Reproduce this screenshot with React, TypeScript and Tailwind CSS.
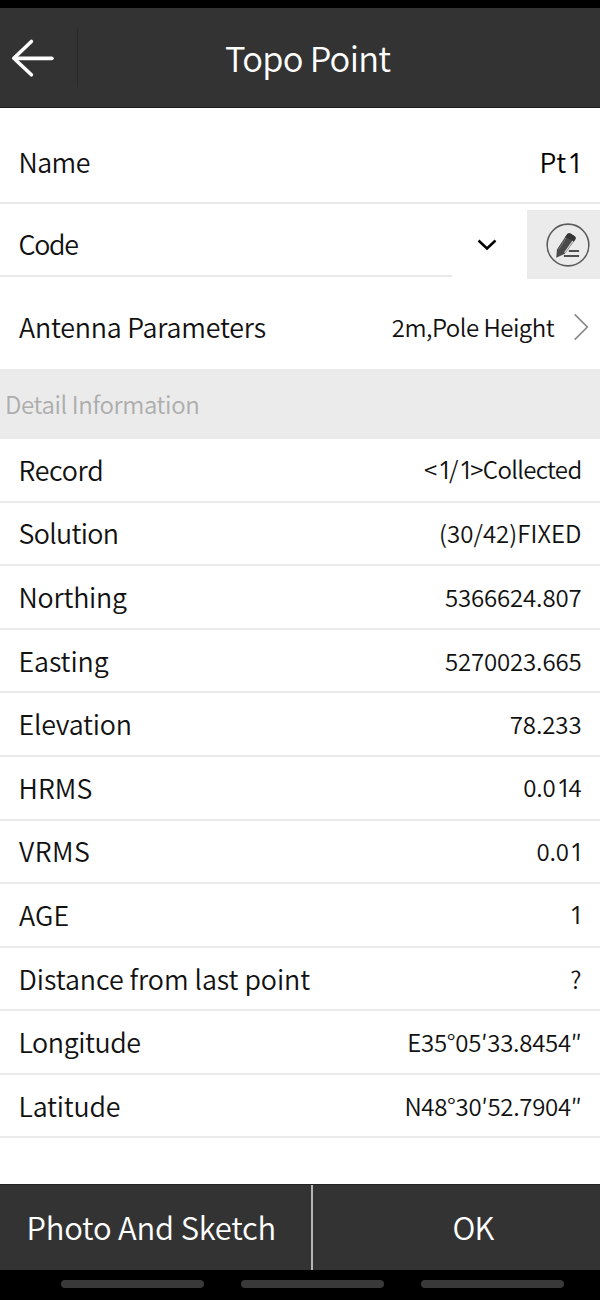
import { Fragment } from 'react';

type Item = { label: string; labelClass: string; value: string; valueClass: string };

const details: Item[] = [
  { label: 'Record', labelClass: 'tracking-[-0.3px]', value: '<1/1>Collected', valueClass: 'tracking-[-0.66px]' },
  { label: 'Solution', labelClass: 'tracking-[-0.65px]', value: '(30/42)FIXED', valueClass: 'tracking-[0.05px]' },
  { label: 'Northing', labelClass: 'tracking-[-0.2px]', value: '5366624.807', valueClass: 'tracking-[-0.15px]' },
  { label: 'Easting', labelClass: 'tracking-[-0.1px]', value: '5270023.665', valueClass: 'tracking-[-0.15px]' },
  { label: 'Elevation', labelClass: 'tracking-[-0.22px]', value: '78.233', valueClass: 'tracking-[-0.09px]' },
  { label: 'HRMS', labelClass: 'tracking-[0.07px]', value: '0.014', valueClass: 'tracking-[-0.2px]' },
  { label: 'VRMS', labelClass: 'tracking-[0.5px] pl-[0.500px]', value: '0.01', valueClass: 'tracking-[-0.24px]' },
  { label: 'AGE', labelClass: 'tracking-[0.12px] pl-[0.500px]', value: '1', valueClass: '' },
  { label: 'Distance from last point', labelClass: 'tracking-[-0.04px]', value: '?', valueClass: '' },
  { label: 'Longitude', labelClass: 'tracking-[-0.42px]', value: 'E35°05′33.8454″', valueClass: 'tracking-[-0.28px]' },
  { label: 'Latitude', labelClass: 'tracking-[-0.2px]', value: 'N48°30′52.7904″', valueClass: 'tracking-[-0.3px]' },
];

// The digit one is set in a face whose "1" has no foot.
function Value({ text }: { text: string }) {
  return (
    <>
      {text.split('1').map((part, i) => (
        <Fragment key={i}>
          {i > 0 && <span className="-mr-[2.500px] ml-[1.500px] font-['Open_Sans'] text-[1.03em] font-normal">1</span>}
          {part}
        </Fragment>
      ))}
    </>
  );
}

function BackArrow() {
  return (
    <svg width="44" height="40" viewBox="0 0 44 40" fill="none" stroke="#fff" strokeLinecap="round" strokeLinejoin="round">
      <path d="M20.400 3.500 2.800 20.300l17.600 16.500" strokeWidth="3.6" />
      <path d="M3.500 20.300h37.300" strokeWidth="3.8" />
    </svg>
  );
}

function EditIcon() {
  return (
    <svg width="44" height="44" viewBox="48 52 133 133" fill="none">
      <circle cx="114.5" cy="118.500" r="63" stroke="#5c5c5c" strokeWidth="4.8" />
      <path d="M79 157 81 132 109 90q5-9 13-6l13 8q5 4 1 11L105 145Z" fill="#4a4a4a" />
      <path d="M109 90q5-9 13-6l13 8q5 4 1 11l-3 4-27-12Z" fill="#363636" />
      <path d="M129 107 104 142" stroke="#e0e0e0" strokeWidth="3.5" />
      <path d="M109 97 86 132" stroke="#808080" strokeWidth="2.5" />
      <path d="M117 136.500h31M102 152h46" stroke="#505050" strokeWidth="6" />
    </svg>
  );
}

export default function App() {
  return (
    <div className="flex h-[1300px] w-[600px] flex-col overflow-hidden bg-white font-['Noto_Sans_CJK_SC','Noto_Sans',sans-serif] text-[26.800px] leading-[40px] font-[350] whitespace-nowrap text-[#111]">
      <div className="h-2 shrink-0 bg-black" />
      <header className="flex h-[100px] shrink-0 items-center border-b border-[#1c1c1c] bg-[#333] text-white">
        <button className="flex h-[58px] w-[78px] items-center border-r border-[#292929] pl-[11px]" aria-label="Back">
          <BackArrow />
        </button>
        <h1 className="ml-[147px] pb-px text-[34.500px] tracking-[-0.75px]">Topo Point</h1>
      </header>

      <div className="flex h-[96px] shrink-0 items-center justify-between border-b-2 border-[#e9e9e9] pt-[13px] pr-[19px] pl-[18.500px]">
        <span className="tracking-[-0.56px]">Name</span>
        <span className="text-black"><Value text="Pt1" /></span>
      </div>

      <div className="flex h-[75px] shrink-0">
        <div className="flex h-[73px] w-[452px] items-center border-b-2 border-[#e9e9e9] pt-[8px] pl-[18.500px]">
          <span className="tracking-[-1.3px]">Code</span>
        </div>
        <div className="flex w-[75px] items-center pt-[7px] pl-[25px]">
          <svg width="20" height="12" viewBox="0 0 20 12" fill="none" stroke="#000" strokeWidth="2.5">
            <path d="m1.500 1.500 8.500 8 8.500-8" />
          </svg>
        </div>
        <button className="mt-[6px] flex h-[69px] w-[73px] items-center bg-[#ebebeb] pl-[19px]" aria-label="Edit code">
          <EditIcon />
        </button>
      </div>

      <div className="flex h-[90px] shrink-0 items-center pt-[6px] pr-[11px] pl-[19px]">
        <span className="tracking-[-0.2px]">Antenna Parameters</span>
        <span className="ml-auto text-[24px] tracking-[-0.52px]">2m,Pole Height</span>
        <svg className="ml-[19px]" width="16" height="28" viewBox="0 0 16 28" fill="none" stroke="#8a8a8a" strokeWidth="1.7">
          <path d="m1.700 1.300 12.600 12.700-12.600 12.700" />
        </svg>
      </div>

      <div className="flex h-[70px] shrink-0 items-center bg-[#ebebeb] pl-[5px] text-[24px] tracking-[-0.38px] text-[#adadad]">
        Detail Information
      </div>

      <div className="grid h-[699.500px] shrink-0 grid-rows-11">
        {details.map((d) => (
          <div key={d.label} className="flex items-center justify-between border-b-2 border-[#ebebeb] pr-[18.500px] pl-[18.500px]">
            <span className={d.labelClass}>{d.label}</span>
            <span className={`text-[24px] ${d.valueClass}`}><Value text={d.value} /></span>
          </div>
        ))}
      </div>

      <div className="mt-auto flex h-[86px] shrink-0 border-t border-[#222] bg-[#333] text-[31px] text-white">
        <button className="flex w-[313px] items-center border-r-2 border-[#b5b5b5] pb-[2px] pl-[26.500px] tracking-[-0.2px]">Photo And Sketch</button>
        <button className="flex flex-1 items-center pb-[2px] pl-[139.500px] tracking-[-0.75px]">OK</button>
      </div>
      <div className="flex h-[30px] shrink-0 gap-[37.500px] bg-black pt-[10px] pl-[61px]">
        <div className="h-[7.500px] w-[142.500px] rounded-full bg-[#393939]" />
        <div className="h-[7.500px] w-[142.500px] rounded-full bg-[#393939]" />
        <div className="h-[7.500px] w-[142.500px] rounded-full bg-[#393939]" />
      </div>
    </div>
  );
}
